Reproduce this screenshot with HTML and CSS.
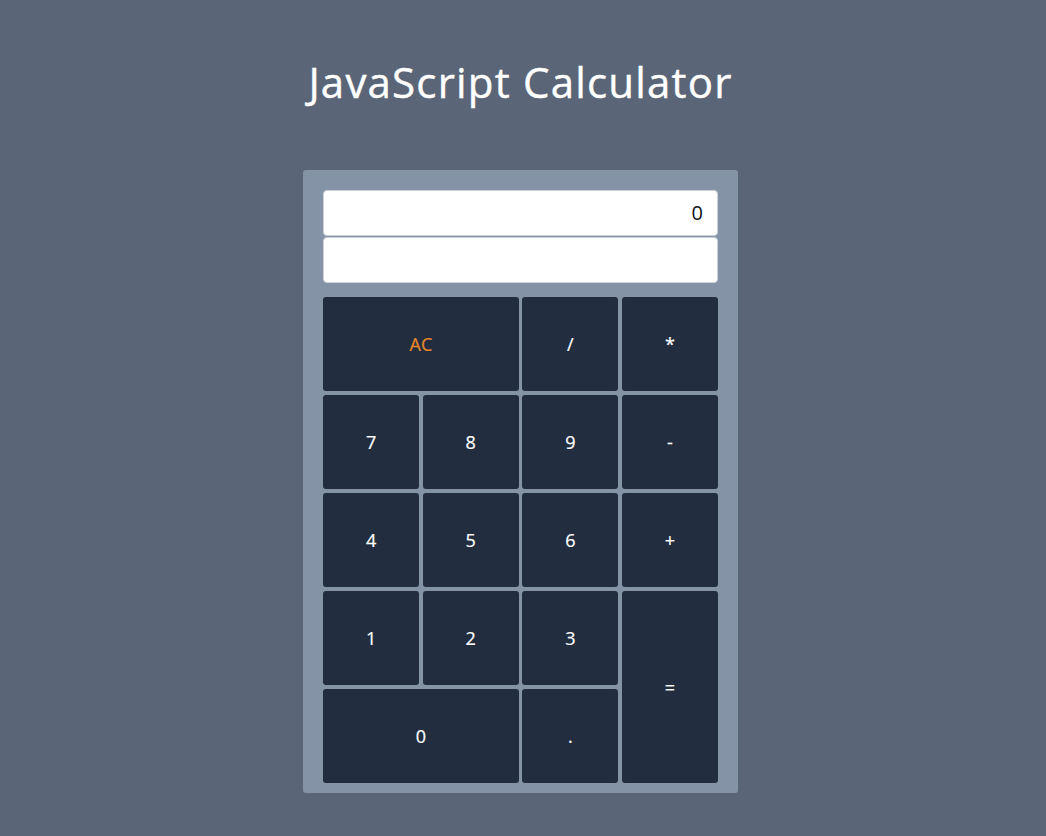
FILE: index.html
```html
<!DOCTYPE html>
<html>
<head>
<meta charset="utf-8">
<link rel="stylesheet" href="styles.css">
</head>
<body>
<h1 class="title">JavaScript Calculator</h1>
<div class="calc">
  <div class="display">0</div>
  <div class="display formula"></div>
  <div class="keys">
    <button class="key span2 clear">AC</button>
    <button class="key">/</button>
    <button class="key">*</button>
    <button class="key">7</button>
    <button class="key">8</button>
    <button class="key">9</button>
    <button class="key">-</button>
    <button class="key">4</button>
    <button class="key">5</button>
    <button class="key">6</button>
    <button class="key">+</button>
    <button class="key">1</button>
    <button class="key">2</button>
    <button class="key">3</button>
    <button class="key equals">=</button>
    <button class="key span2">0</button>
    <button class="key">.</button>
  </div>
</div>
</body>
</html>
```
FILE: styles.css
```css
html, body {
  margin: 0;
  padding: 0;
  background: #5a6677;
  font-family: "Open Sans", "Noto Sans", sans-serif;
}
body {
  display: flex;
  flex-direction: column;
  align-items: center;
  min-height: 836px;
  padding-right: 5px;
}
.title {
  margin: 54px 0 0 0;
  height: 116px;
  color: #ffffff;
  font-weight: 400;
  font-size: 42px;
  line-height: 56px;
  letter-spacing: 1.2px;
  -webkit-text-stroke: 0.4px #ffffff;
}
.calc {
  width: 395px;
  padding: 20px 20px 10px 20px;
  background: #8494a6;
  border-radius: 3px;
  display: flex;
  flex-direction: column;
}
.display {
  box-sizing: border-box;
  height: 46px;
  background: #ffffff;
  border: 1px solid #ccd3db;
  border-radius: 4px;
  margin-bottom: 1px;
  padding: 0 14px;
  text-align: right;
  font-size: 20px;
  line-height: 44px;
  color: #111;
}
.formula {
  margin-bottom: 14px;
}
.keys {
  display: grid;
  grid-template-columns: repeat(4, 1fr);
  grid-auto-rows: 94px;
  column-gap: 3.5px;
  row-gap: 4px;
}
.key {
  border: none;
  border-radius: 3px;
  background: #222e3f;
  color: #ffffff;
  font-family: "Open Sans", "Noto Sans", sans-serif;
  font-size: 18px;
  font-weight: 400;
  -webkit-text-stroke: 0.2px currentColor;
  padding: 0;
}
.span2 {
  grid-column: span 2;
}
.clear {
  color: #e8862a;
}
.equals {
  grid-row: span 2;
}
```
